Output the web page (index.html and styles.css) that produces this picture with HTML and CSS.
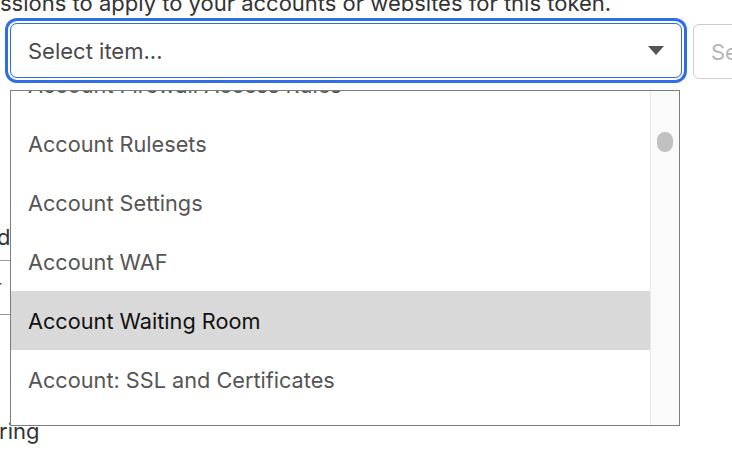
FILE: index.html
```html
<!DOCTYPE html>
<html lang="en">
<head>
<meta charset="utf-8">
<title>Permissions</title>
<link rel="stylesheet" href="styles.css">
</head>
<body>
<div class="page">
  <p class="intro">ssions to apply to your accounts or websites for this token.</p>
  <div class="row">
    <div class="select focused">
      <span class="placeholder">Select item...</span>
      <span class="caret"></span>
    </div>
    <div class="select secondary">
      <span class="placeholder muted">Select...</span>
    </div>
  </div>

  <div class="behind">
    <div class="behind-label">de</div>
    <div class="behind-select"><span class="caret"></span></div>
    <div class="behind-label ring">ring</div>
  </div>

  <div class="dropdown">
    <ul class="options">
      <li class="option">Account Firewall Access Rules</li>
      <li class="option">Account Rulesets</li>
      <li class="option">Account Settings</li>
      <li class="option">Account WAF</li>
      <li class="option active">Account Waiting Room</li>
      <li class="option">Account: SSL and Certificates</li>
    </ul>
    <div class="scrollbar"><div class="thumb"></div></div>
  </div>
</div>
</body>
</html>
```

FILE: styles.css
```css
html, body {
  margin: 0;
  padding: 0;
  background: #ffffff;
}

body {
  font-family: Inter, "Noto Sans", "Liberation Sans", sans-serif;
  font-size: 22px;
  line-height: 24px;
  color: #333333;
  overflow: hidden;
  width: 732px;
  height: 458px;
}

.page {
  position: relative;
  width: 732px;
  height: 458px;
  overflow: hidden;
}

.intro {
  margin: -9px 0 0 0;
  white-space: nowrap;
  color: #333333;
}

.row {
  display: flex;
  align-items: flex-start;
  gap: 11px;
  margin-top: 8px;
  margin-left: 10px;
}

.select {
  box-sizing: border-box;
  height: 55px;
  border-radius: 7px;
  display: flex;
  align-items: center;
  padding: 0 17px;
  flex-shrink: 0;
}

.select.focused {
  width: 672px;
  border: 1px solid #2f6ee6;
  box-shadow: 0 0 0 2px #ffffff, 0 0 0 5px #2f6ee6;
  justify-content: space-between;
}

.select.secondary {
  width: 200px;
  margin-top: 1px;
  border: 1px solid #cccccc;
  border-radius: 6px;
}

.placeholder {
  color: #4a4a4a;
  white-space: nowrap;
}

.placeholder.muted {
  color: #b5b5b5;
}

.caret {
  width: 0;
  height: 0;
  border-left: 8px solid transparent;
  border-right: 8px solid transparent;
  border-top: 9px solid #555555;
}

.behind {
  display: flex;
  flex-direction: column;
  align-items: flex-start;
}

.behind-label {
  margin-top: 146px;
  margin-left: -3px;
  color: #333333;
}

.behind-select {
  box-sizing: border-box;
  margin-top: 11px;
  margin-left: -40px;
  width: 60px;
  height: 55px;
  border: 1px solid #999999;
  border-radius: 6px;
  display: flex;
  align-items: center;
  justify-content: flex-end;
  padding-right: 17px;
}

.behind-label.ring {
  margin-top: 104px;
  margin-left: -1px;
}

.dropdown {
  position: absolute;
  left: 10px;
  top: 90px;
  width: 670px;
  height: 336px;
  box-sizing: border-box;
  border: 1px solid #7d7d7d;
  background: #ffffff;
  display: flex;
  overflow: hidden;
}

.options {
  list-style: none;
  margin: -36px 0 0 0;
  padding: 0;
  flex: 1;
  font-size: 21.7px;
}

.option {
  height: 59px;
  display: flex;
  align-items: center;
  padding-left: 17px;
  color: #555555;
  white-space: nowrap;
}

.option.active {
  background: #d9d9d9;
  color: #111111;
}

.scrollbar {
  width: 28px;
  flex-shrink: 0;
  background: #fafafa;
  border-left: 1px solid #e8e8e8;
  display: flex;
  justify-content: center;
}

.thumb {
  width: 16px;
  height: 20px;
  border-radius: 8px;
  background: #c1c1c1;
  margin-top: 41px;
}
```
